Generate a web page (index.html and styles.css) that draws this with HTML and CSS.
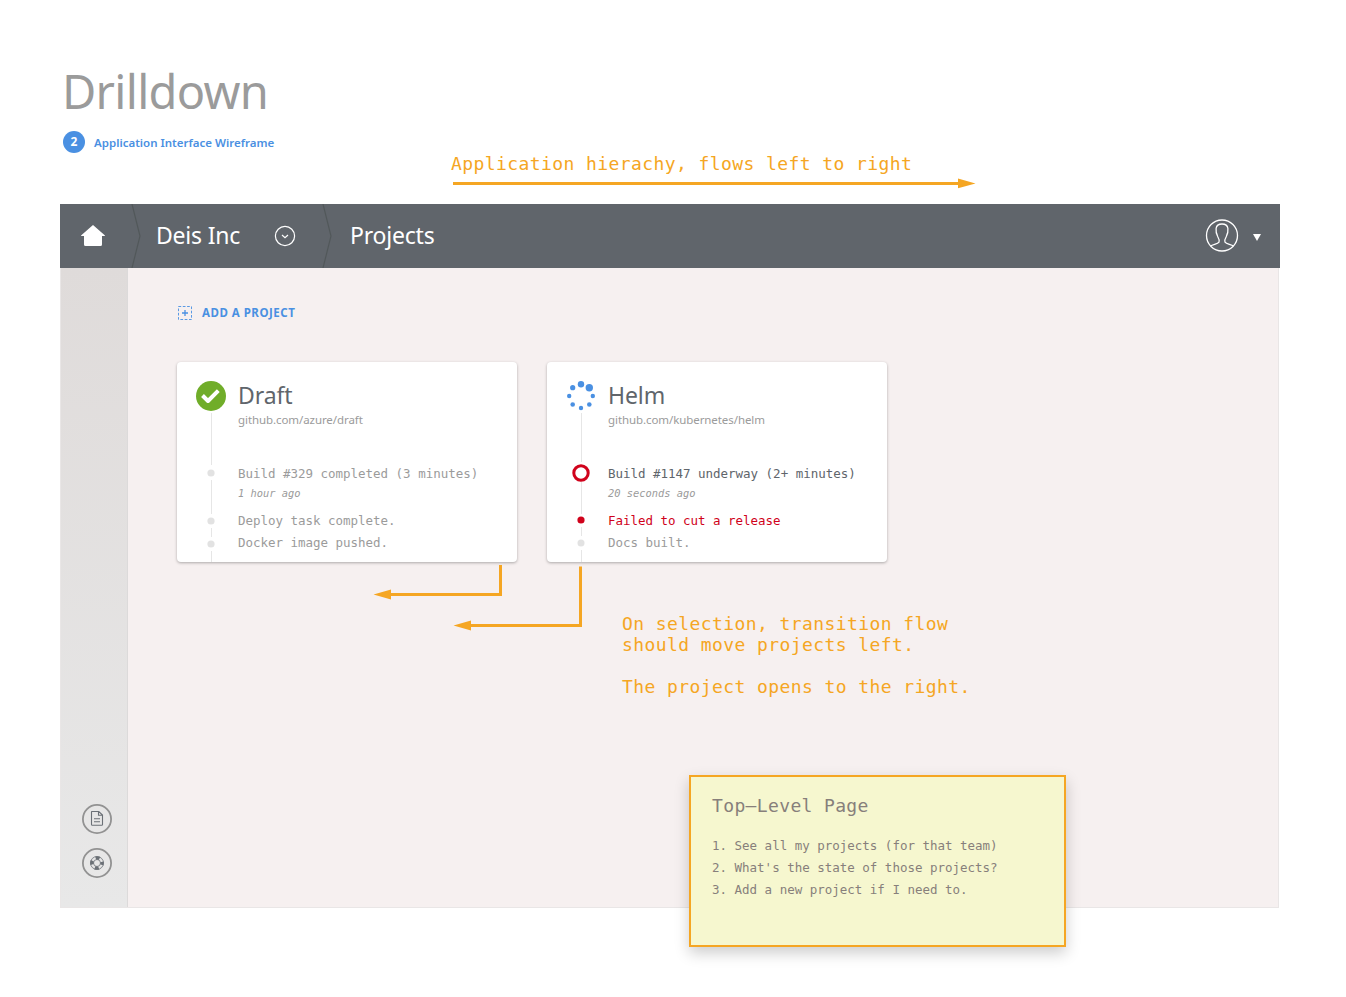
FILE: index.html
```html
<!DOCTYPE html>
<html lang="en">
<head>
<meta charset="utf-8">
<title>Drilldown</title>
<link rel="stylesheet" href="styles.css">
</head>
<body>
<div class="page">
  <header class="intro">
    <h1 class="title"><span>Drilldown</span></h1>
    <div class="subtitle"><span class="step">2</span><span class="subtitle-text">Application Interface Wireframe</span></div>
  </header>

  <div class="app">
    <nav class="bar">
      <svg class="bar-home" width="26" height="24" viewBox="0 0 26 24"><path d="M13 1 L25 11.4 Q25 12 24 12 H22 V20.500 Q22 22 20.500 22 H5.500 Q4 22 4 20.500 V12 H2 Q1 12 1 11.400 Z" fill="#fff"/></svg>
      <svg class="divider" width="10" height="64" viewBox="0 0 10 64"><path d="M1 0 L9 32 L1 64" fill="none" stroke="#52585a" stroke-width="1.200"/></svg>
      <span class="crumb crumb-team"><span>Deis Inc</span></span>
      <svg class="bar-down" width="22" height="22" viewBox="0 0 22 22" fill="none" stroke="#fff"><circle cx="11" cy="11" r="9.600" stroke-width="1.200"/><path d="M8 10 L11 12.600 L14 10" stroke-width="1.200"/></svg>
      <svg class="divider" width="10" height="64" viewBox="0 0 10 64"><path d="M1 0 L9 32 L1 64" fill="none" stroke="#52585a" stroke-width="1.200"/></svg>
      <span class="crumb crumb-page"><span>Projects</span></span>
      <svg class="bar-user" width="34" height="34" viewBox="0 0 34 34" fill="none" stroke="#fff" stroke-width="1.300"><circle cx="17" cy="16.500" r="15.500"/><path d="M5.500 27 C8 25.300 12.500 25 14 23.200 C14.600 21 14 19.700 12.700 17.500 C11.400 15 10.800 12 11.100 9.500 C11.500 6.200 14 5 17 5 C20 5 22.500 6.200 22.900 9.500 C23.200 12 22.600 15 21.300 17.500 C20 19.700 19.400 21 20 23.200 C21.500 25 26 25.300 28.500 27"/></svg>
      <svg class="bar-caret" width="8" height="7" viewBox="0 0 8 7"><path d="M0 0 H8 L4 7 Z" fill="#fff"/></svg>
    </nav>
    <div class="body">
      <aside class="side">
        <svg width="30" height="30" viewBox="0 0 30 30" fill="none"><circle cx="15" cy="15" r="14.100" stroke="#929292" stroke-width="1.800"/><g stroke="#6b7076" stroke-width="1.100"><path d="M9.700 7.500 H16.800 L20.500 11 V20.500 Q20.500 21.300 19.700 21.300 H10.300 Q9.500 21.300 9.500 20.500 V8 Z M16.500 7.700 V11.200 H20.300 M12 14.700 H18 M12 17.700 H18"/></g></svg>
        <svg width="30" height="30" viewBox="0 0 30 30" fill="none"><circle cx="15" cy="15" r="14.100" stroke="#929292" stroke-width="1.800"/><circle cx="15" cy="15" r="6.500" stroke="#6b7076" stroke-width=".8"/><circle cx="15" cy="15" r="3.500" stroke="#6b7076" stroke-width=".8"/><circle cx="15" cy="15" r="5.100" stroke="#6b7076" stroke-width="3.400" stroke-dasharray="4 4.011" stroke-dashoffset="2"/></svg>
      </aside>
      <main class="main">
        <div class="add">
          <svg width="16" height="16" viewBox="0 0 16 16" fill="none" stroke="#4a90e2"><rect x="1.500" y="1.500" width="13" height="13" stroke-dasharray="2.700 1.600" stroke-width=".9"/><path d="M8 5 V11 M5 8 H11" stroke-width="1.300"/></svg>
          <span class="add-text">ADD A PROJECT</span>
        </div>
        <div class="cards">
          <article class="card">
            <svg class="timeline" width="34" height="200" viewBox="0 0 34 200"><path d="M17.500 51 V103 M17.500 118 V152 M17.500 166 V175 M17.500 189 V200" stroke="#e6e6e6"/><circle cx="17" cy="34" r="15" fill="#70ad29"/><path d="M8.500 33.500 L14 39 L24.300 28.700" fill="none" stroke="#fff" stroke-width="4" stroke-linejoin="round"/><g fill="#e2e2e2"><circle cx="17" cy="111" r="3.600"/><circle cx="17" cy="159" r="3.600"/><circle cx="17" cy="182" r="3.600"/></g></svg>
            <div class="info">
              <h2 class="name"><span>Draft</span></h2>
              <p class="repo"><span>github.com/azure/draft</span></p>
              <p class="event">Build #329 completed (3 minutes)</p>
              <p class="time">1 hour ago</p>
              <p class="event">Deploy task complete.</p>
              <p class="event">Docker image pushed.</p>
            </div>
          </article>
          <article class="card">
            <svg class="timeline" width="34" height="200" viewBox="0 0 34 200"><path d="M17.500 51 V100 M17.500 120 V152 M17.500 165 V174 M17.500 188 V200" stroke="#e6e6e6"/><g fill="#4a90e2"><circle cx="17" cy="22.300" r="3.200"/><circle cx="25.300" cy="25.700" r="3.700"/><circle cx="8.700" cy="25.700" r="2.600"/><circle cx="5.200" cy="34" r="2.200"/><circle cx="28.800" cy="34" r="2.200"/><circle cx="8.700" cy="42.500" r="2.300"/><circle cx="25.300" cy="42.500" r="2.300"/><circle cx="17" cy="46" r="2.200"/></g><circle cx="17" cy="111" r="7.200" fill="#fff" stroke="#d0021b" stroke-width="3"/><circle cx="17" cy="158" r="3.600" fill="#d0021b"/><circle cx="17" cy="181" r="3.500" fill="#e2e2e2"/></svg>
            <div class="info">
              <h2 class="name"><span>Helm</span></h2>
              <p class="repo"><span>github.com/kubernetes/helm</span></p>
              <p class="event event-active">Build #1147 underway (2+ minutes)</p>
              <p class="time">20 seconds ago</p>
              <p class="event event-failed">Failed to cut a release</p>
              <p class="event">Docs built.</p>
            </div>
          </article>
        </div>
      </main>
    </div>
  </div>

  <p class="note note-top">Application hierachy, flows left to right</p>
  <p class="note note-flow">On selection, transition flow<br>should move projects left.<br><br>The project opens to the right.</p>
  <svg class="arrows" width="1346" height="997" viewBox="0 0 1346 997"><g fill="none" stroke="#f5a623" stroke-width="3"><path d="M453 183.500 H960 M500.500 565 V594.500 H390 M580.500 566.500 V625.500 H470"/></g><path d="M958 178.500 L975.500 183.500 L958 188.300 Z M391 589.500 L373.500 594.500 L391 599.500 Z M471 620.500 L453.500 625.500 L471 630.500 Z" fill="#f5a623"/></svg>
  <section class="sticky">
    <h3 class="sticky-title">Top–Level Page</h3>
    <p class="sticky-line">1. See all my projects (for that team)</p>
    <p class="sticky-line">2. What's the state of those projects?</p>
    <p class="sticky-line">3. Add a new project if I need to.</p>
  </section>
</div>
</body>
</html>
```
FILE: styles.css
```css
* { box-sizing: border-box; margin: 0; padding: 0; }
body { background: #fff; font-family: "Noto Sans", "Open Sans", sans-serif; }
svg { display: block; flex: none; }
.page { position: relative; width: 1346px; height: 997px; overflow: hidden; padding: 58px 66px 0 60px; }
.intro { height: 146px; }
.title { height: 66px; padding-left: 2px; line-height: 66px; font-size: 47px; font-weight: 370; letter-spacing: -.7px; color: #9b9b9b; }
.subtitle { display: flex; align-items: center; gap: 9px; height: 22px; margin-top: 7px; padding-left: 3px; }
.step { width: 22px; height: 22px; border-radius: 50%; background: #4a90e2; color: #fff; font-size: 12px; font-weight: 700; line-height: 22px; text-align: center; }
.subtitle-text { padding-top: 1px; color: #4a90e2; font-size: 11.5px; font-weight: 600; line-height: 22px; }
.app { width: 1220px; }
.bar { display: flex; align-items: center; height: 64px; padding: 0 19px 0 20px; background: #60656b; color: #fff; }
.bar-home { margin-right: 25px; }
.crumb { padding-bottom: 2px; font-size: 23px; font-weight: 370; letter-spacing: -.2px; line-height: 32px; white-space: nowrap; }
.crumb-team { width: 134px; padding-left: 15px; }
.bar-down { margin: 0 26px 0 -1px; }
.crumb-page { padding-left: 18px; }
.bar-user { margin-left: auto; margin-right: 14px; }
.bar-caret { margin-top: 3px; }
.body { display: flex; width: 1219px; height: 640px; border: 1px solid #e9e6e6; border-top: 0; background: #f6f0f0; }
.side { display: flex; flex-direction: column; justify-content: flex-end; gap: 14px; width: 67px; padding: 0 0 29px 21px; border-right: 1px solid #dcdada; background: linear-gradient(#dfdbda, #e8e8e8); }
.main { flex: 1; padding: 37px 0 0 49px; }
.add { display: flex; align-items: center; gap: 9px; height: 16px; }
.add-text { padding-bottom: 1px; color: #4a90e2; font-size: 11.5px; font-weight: 700; letter-spacing: .5px; }
.cards { display: flex; gap: 30px; margin-top: 41px; }
.card { display: flex; gap: 10px; width: 340px; height: 200px; padding-left: 17px; border-radius: 4px; background: #fff; box-shadow: 0 1px 3px rgba(0,0,0,.3); white-space: nowrap; }
.info { padding-top: 17px; }
.name { height: 33px; line-height: 32px; font-size: 23px; font-weight: 370; letter-spacing: -.1px; color: #60656b; }
.repo { height: 16px; line-height: 16px; font-size: 11.5px; letter-spacing: -.08px; color: #9b9b9b; margin-bottom: 35px; }
.event, .time, .note, .sticky { font-family: "DejaVu Sans Mono", "Liberation Mono", monospace; }
.event { height: 22px; line-height: 22px; font-size: 12.5px; letter-spacing: -.02px; color: #9b9b9b; }
.event-active { color: #60656b; }
.event-failed { color: #d0021b; }
.time { height: 16px; margin: 0 0 9px; line-height: 16px; font-size: 10.4px; font-style: italic; color: #9b9b9b; }
.note { position: absolute; color: #f5a623; font-size: 18px; letter-spacing: .41px; line-height: 21px; white-space: nowrap; }
.note-top { left: 451px; top: 153px; }
.note-flow { left: 622px; top: 613px; }
.arrows { position: absolute; left: 0; top: 0; }
.sticky { position: absolute; left: 689px; top: 775px; width: 377px; height: 172px; padding: 17px 21px; border: 2px solid #f5a623; background: #f6f7cf; box-shadow: 0 6px 14px rgba(0,0,0,.2); color: #877f7b; white-space: nowrap; }
.sticky-title { height: 24px; margin-bottom: 17px; line-height: 24px; font-size: 18px; font-weight: 400; letter-spacing: .36px; }
.sticky-line { height: 22px; line-height: 22px; font-size: 12.5px; letter-spacing: -.01px; }
```
